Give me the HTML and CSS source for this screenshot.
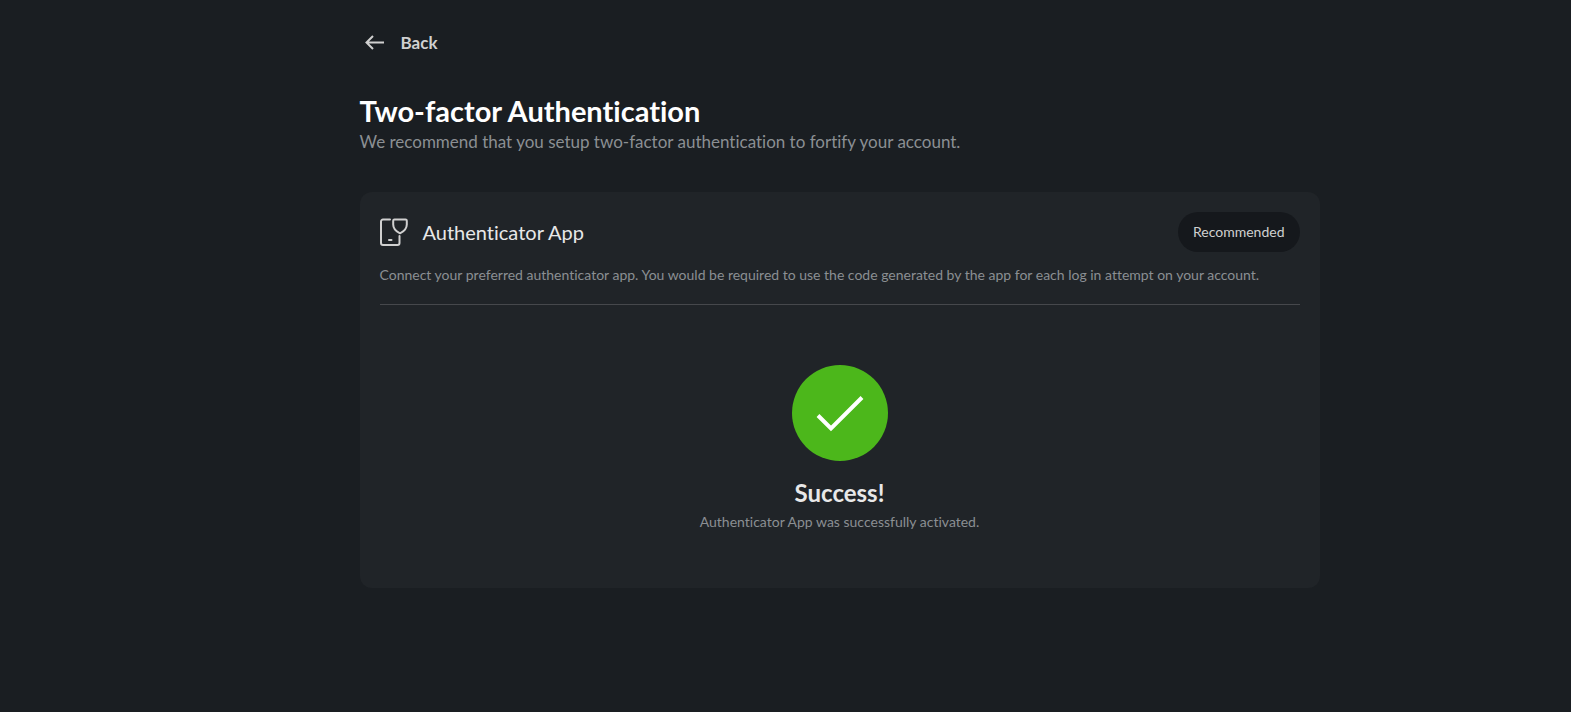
FILE: index.html
```html
<!DOCTYPE html>
<html lang="en">
<head>
    <meta charset="UTF-8">
    <meta name="viewport" content="width=device-width, initial-scale=1.0">
    <title>Two-factor Authentication</title>
    <link rel="stylesheet" href="styles.css">
</head>
<body>
    <main class="page">
        <a class="back" href="#">
            <svg class="back-icon" viewBox="0 0 20 16" fill="none" stroke="currentColor" stroke-width="2" aria-hidden="true">
                <path d="M19 7.5H2M8 1 1.5 7.5 8 14"/>
            </svg>
            Back
        </a>

        <header class="page-header">
            <h1>Two-factor Authentication</h1>
            <p>We recommend that you setup two-factor authentication to fortify your account.</p>
        </header>

        <section class="card">
            <div class="card-header">
                <svg class="app-icon" viewBox="0 0 28 28" fill="none" stroke="currentColor" stroke-width="2" stroke-linecap="round" stroke-linejoin="round" aria-hidden="true">
                    <path d="M10 1.5H3a2 2 0 0 0-2 2V25a2 2 0 0 0 2 2h14.5a2 2 0 0 0 2-2v-7"/>
                    <path d="M14.5 1.5h11a1.3 1.3 0 0 1 1.3 1.3v3.7c0 4.5-3 7-6.8 8.8-3.8-1.8-6.8-4.3-6.8-8.8V2.8a1.3 1.3 0 0 1 1.3-1.3z"/>
                    <path d="M9 22h2.500"/>
                </svg>
                <h2>Authenticator App</h2>
                <span class="badge">Recommended</span>
            </div>
            <p class="card-text">Connect your preferred authenticator app. You would be required to use the code generated by the app for each log in attempt on your account.</p>

            <div class="result">
                <svg class="result-icon" viewBox="0 0 96 96" aria-hidden="true">
                    <circle cx="48" cy="48" r="48" fill="#4cb71b"/>
                    <path d="M26 50.5 39 63.5 70 32.5" fill="none" stroke="#fff" stroke-width="4"/>
                </svg>
                <h3>Success!</h3>
                <p>Authenticator App was successfully activated.</p>
            </div>
        </section>
    </main>
</body>
</html>
```
FILE: styles.css
```css
* {
    box-sizing: border-box;
}
body {
    margin: 0;
    padding: 32px 24px 32px 132px;
    background-color: #1a1e22;
    color: #e8e8e8;
    font-family: Lato, sans-serif;
    font-size: 14px;
    font-variant-ligatures: none;
    line-height: 20px;
}
h1, h2, h3, p {
    margin: 0;
}
.page {
    max-width: 960px;
    margin: 0 auto;
}
.back {
    display: inline-flex;
    align-items: center;
    gap: 16px;
    padding-left: 5px;
    color: #d0d0d0;
    font-size: 17px;
    font-weight: bold;
    line-height: 22px;
    text-decoration: none;
}
.back-icon {
    width: 20px;
    height: 16px;
}
.page-header {
    margin: 36px 0 38px;
}
.page-header h1 {
    color: #fff;
    font-size: 29px;
    line-height: 38px;
}
.page-header p {
    color: #8b8f93;
    font-size: 17px;
    line-height: 24px;
}
.card {
    padding: 20px;
    background-color: #202428;
    border-radius: 12px;
}
.card-header {
    display: flex;
    align-items: center;
    gap: 15px;
}
.card-header h2 {
    font-size: 20px;
    font-weight: normal;
    line-height: 24px;
}
.app-icon {
    width: 28px;
    height: 28px;
    color: #d0d0d0;
}
.badge {
    margin-left: auto;
    padding: 10px 15px;
    background-color: #15181c;
    border-radius: 20px;
    color: #d0d0d0;
}
.card-text {
    padding: 13px 0 19px;
    border-bottom: 1px solid #46484c;
    color: #8b8f93;
}
.result {
    display: flex;
    flex-direction: column;
    align-items: center;
    padding: 60px 0 36px;
}
.result-icon {
    width: 96px;
    height: 96px;
    margin-bottom: 16px;
}
.result h3 {
    font-size: 24px;
    line-height: 32px;
}
.result p {
    margin-top: 3px;
    color: #8b8f93;
}
```
